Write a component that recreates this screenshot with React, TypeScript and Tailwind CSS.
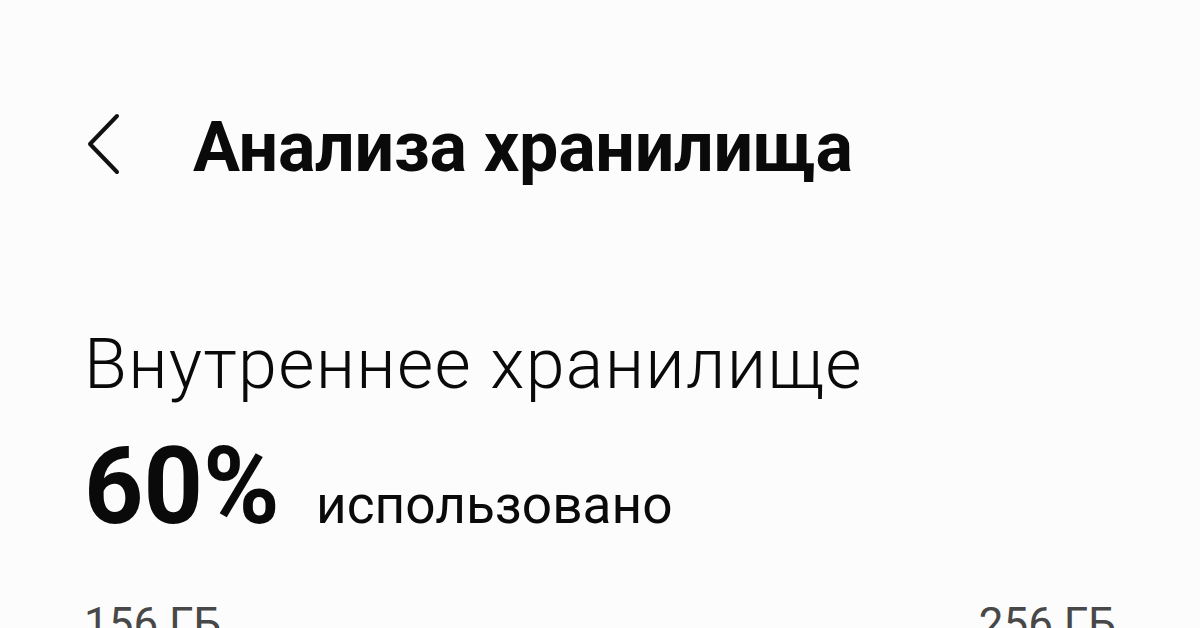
export default function App() {
  return (
    <div className="h-[628px] w-[1200px] overflow-hidden bg-[#fcfcfc] text-[#0a0a0a] font-['Roboto',sans-serif]">
      {/* Header */}
      <div className="flex items-start pl-[86px] pt-[112px]">
        <svg width="36" height="64" viewBox="0 0 36 64" fill="none" className="shrink-0">
          <polyline points="31,4 4,32 31,60" stroke="#111" strokeWidth="4" strokeLinecap="round" strokeLinejoin="round" />
        </svg>
        <h1 className="ml-[71px] whitespace-nowrap text-[70px] font-bold leading-none tracking-[-0.3px]">
          Анализа хранилища
        </h1>
      </div>

      {/* Storage summary */}
      <div className="px-[84px] pt-[147px]">
        <p className="whitespace-nowrap text-[70px] font-light leading-none tracking-[1.3px]">Внутреннее хранилище</p>
        <div className="mt-[34px] flex items-baseline">
          <span className="origin-left scale-x-[0.97] text-[107px] font-bold leading-none">60%</span>
          <span className="ml-[30px] origin-left scale-x-[0.985] text-[54px] leading-none">использовано</span>
        </div>
        <div className="mt-[62px] flex justify-between text-[44px] leading-none text-[#484848]">
          <span>156 ГБ</span>
          <span>256 ГБ</span>
        </div>
      </div>
    </div>
  )
}
